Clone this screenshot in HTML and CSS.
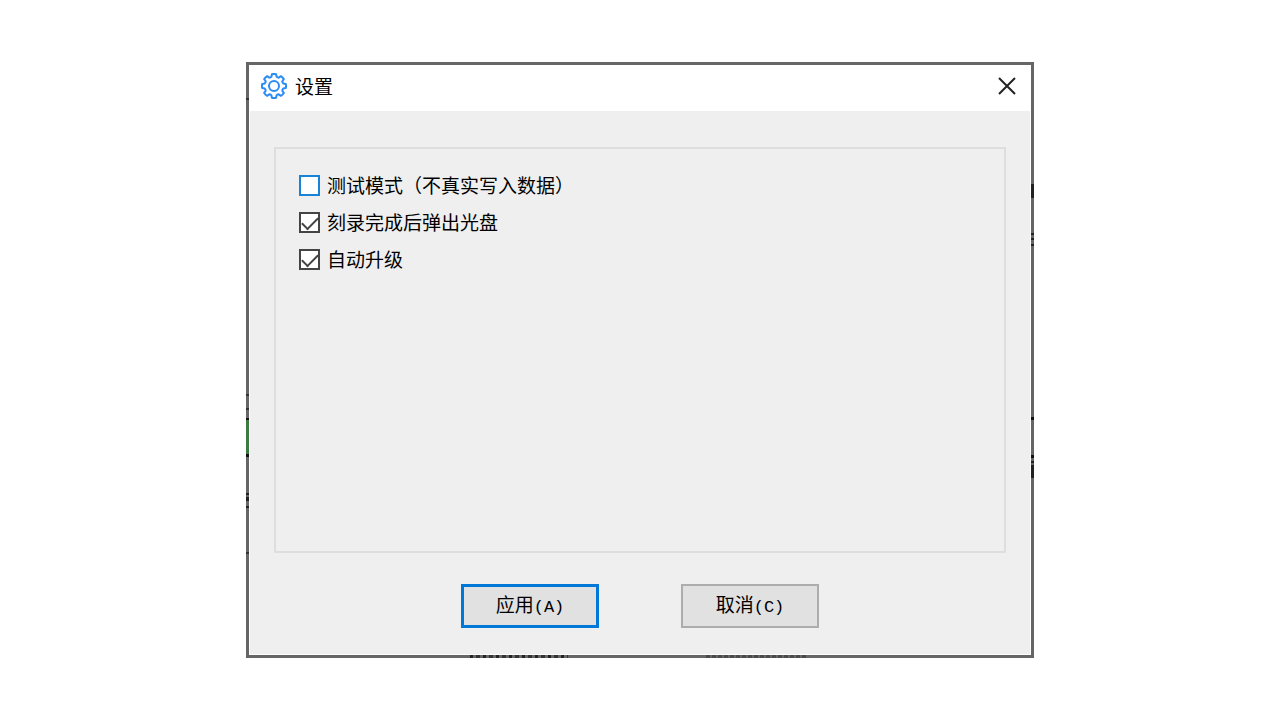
FILE: index.html
```html
<!DOCTYPE html>
<html lang="zh-CN">
<head>
  <meta charset="UTF-8">
  <meta name="viewport" content="width=device-width, initial-scale=1.0">
  <title>设置</title>
  <link rel="stylesheet" href="styles.css">
</head>
<body>
  <div class="frame">
    <form class="dialog">
      <header class="titlebar">
        <svg class="gear" viewBox="-13 -13 26 26" aria-hidden="true">
          <path d="M-2.1-11.8 Q0-12.3 2.1-11.8 L2.6-9.2 Q3.6-8.4 4.7-8.3 L6.9-9.8 Q8.7-8.7 9.8-6.9 L8.3-4.7 Q8.4-3.6 9.2-2.6 L11.8-2.1 Q12.3 0 11.8 2.1 L9.2 2.6 Q8.4 3.6 8.3 4.7 L9.8 6.9 Q8.7 8.7 6.9 9.8 L4.7 8.3 Q3.6 8.4 2.6 9.2 L2.1 11.8 Q0 12.3-2.1 11.8 L-2.6 9.2 Q-3.6 8.4-4.7 8.3 L-6.9 9.8 Q-8.7 8.7-9.8 6.9 L-8.3 4.7 Q-8.4 3.6-9.2 2.6 L-11.8 2.1 Q-12.3 0-11.8-2.1 L-9.2-2.6 Q-8.4-3.6-8.3-4.7 L-9.8-6.9 Q-8.7-8.7-6.9-9.8 L-4.7-8.3 Q-3.6-8.4-2.6-9.2 Z"/>
          <circle r="5"/>
        </svg>
        <h1 class="title">设置</h1>
        <button type="button" class="close" aria-label="关闭">
          <svg viewBox="0 0 18 18" aria-hidden="true"><path d="M1 1 L17 17 M17 1 L1 17"/></svg>
        </button>
      </header>

      <div class="options">
        <label class="option"><input type="checkbox" class="check hot">测试模式（不真实写入数据）</label>
        <label class="option"><input type="checkbox" class="check" checked>刻录完成后弹出光盘</label>
        <label class="option"><input type="checkbox" class="check" checked>自动升级</label>
      </div>

      <div class="actions">
        <button type="button" class="button default">应用<span class="key">(A)</span></button>
        <button type="button" class="button">取消<span class="key">(C)</span></button>
      </div>
    </form>
  </div>
</body>
</html>
```

FILE: styles.css
```css
* {
  box-sizing: border-box;
}

body {
  display: flex;
  align-items: center;
  justify-content: center;
  min-height: 100vh;
  margin: 0;
  background: #fff;
  color: #000;
  font-family: "Noto Sans CJK SC", sans-serif;
  font-size: 19px;
  line-height: 24px;
}

/* parts of the main window show through the frame */
.frame {
  width: 100%;
  max-width: 788px;
  padding: 3px;
  background:
    linear-gradient(#111 2px, #3d7a42 2px 36px, #111 36px 39px, transparent 39px) 0 356px / 3px 40px no-repeat,
    linear-gradient(#333 2px, transparent 2px 14px, #333 14px 16px, transparent 16px) 0 332px / 3px 16px no-repeat,
    linear-gradient(#222 2px, transparent 2px 4px, #222 4px 8px, transparent 8px 13px, #222 13px 15px) 0 431px / 3px 15px no-repeat,
    linear-gradient(#333, #333) 0 36px / 3px 2px no-repeat,
    linear-gradient(#333, #333) 0 490px / 3px 2px no-repeat,
    linear-gradient(#222, #222) 100% 122px / 3px 14px no-repeat,
    linear-gradient(#222 2px, transparent 2px 5px, #222 5px 7px, transparent 7px 11px, #222 11px 13px) 100% 171px / 3px 13px no-repeat,
    linear-gradient(#111, #111) 100% 355px / 3px 3px no-repeat,
    linear-gradient(#111 3px, transparent 3px 6px, #222 6px 8px, transparent 8px 10px, #222 10px) 100% 393px / 3px 23px no-repeat,
    repeating-linear-gradient(90deg, #222 0 3px, transparent 3px 6px, #333 6px 10px, transparent 10px 13px) 224px 100% / 98px 3px no-repeat,
    repeating-linear-gradient(90deg, #4a4a4a 0 4px, transparent 4px 6px) 460px 100% / 100px 3px no-repeat,
    #666;
}

.dialog {
  border: 1px solid #fff;
  background: #efefef;
}

.titlebar {
  display: flex;
  align-items: center;
  gap: 8px;
  height: 45px;
  padding: 0 14px 6px 11px;
  background: #fff;
}

.gear {
  width: 26px;
  height: 26px;
  fill: none;
  stroke: #2b8cf5;
  stroke-width: 2;
  stroke-linejoin: round;
}

.title {
  flex: 1;
  margin: 0;
  font-size: 19px;
  font-weight: 400;
}

.close {
  display: flex;
  padding: 0;
  border: 0;
  background: none;
}

.close svg {
  width: 18px;
  height: 18px;
  fill: none;
  stroke: #222;
  stroke-width: 2;
}

.options {
  display: flex;
  flex-direction: column;
  align-items: flex-start;
  gap: 13px;
  min-height: 406px;
  margin: 36px 24px 31px;
  padding: 24px 23px;
  border: 2px solid #dedede;
}

.option {
  display: flex;
  align-items: center;
  gap: 7px;
}

.check {
  appearance: none;
  display: flex;
  justify-content: center;
  width: 21px;
  height: 21px;
  margin: 0;
  border: 2px solid #444;
  background: #fff;
}

.check.hot {
  border-color: #1883d7;
}

.check:checked::after {
  content: "";
  width: 14px;
  height: 7px;
  margin-top: 3px;
  border: solid #444;
  border-width: 0 0 2px 2px;
  transform: rotate(-45deg);
}

.actions {
  display: flex;
  flex-wrap: wrap;
  justify-content: center;
  gap: 82px;
  padding-bottom: 26px;
}

.button {
  width: 138px;
  height: 44px;
  padding: 0;
  border: 2px solid #adadad;
  background: #e1e1e1;
  color: #000;
  font: inherit;
}

.button.default {
  border: 3px solid #0078d7;
}

.key {
  font-family: "Liberation Mono", monospace;
  font-size: 17px;
}
```
